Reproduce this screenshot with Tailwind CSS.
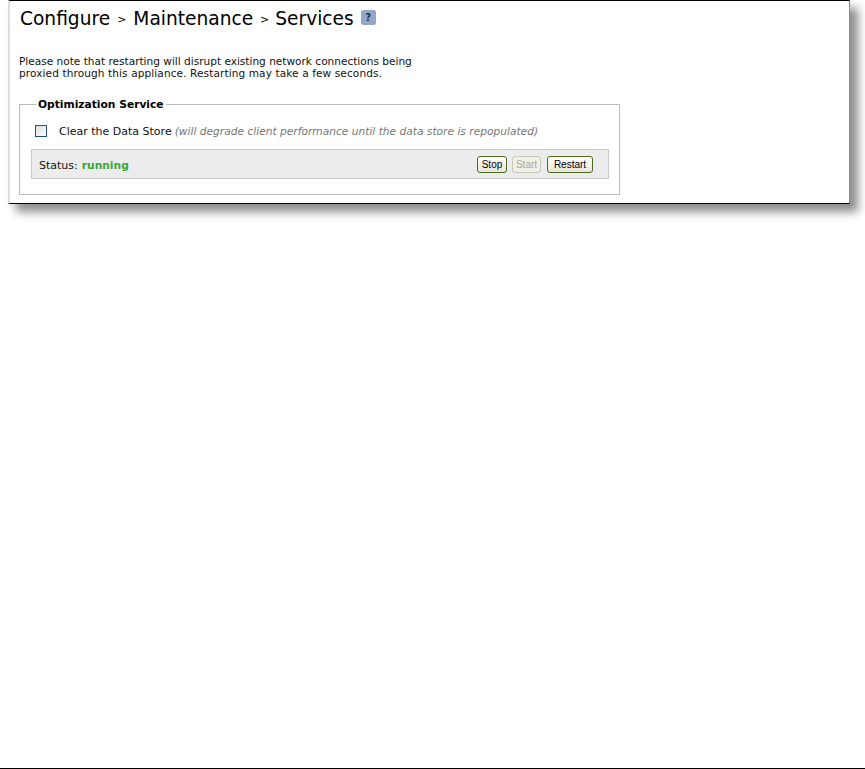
<!DOCTYPE html>
<html lang="en">
<head>
<meta charset="utf-8">
<title>Configure > Maintenance > Services</title>
<script src="https://cdn.jsdelivr.net/npm/@tailwindcss/browser@4"></script>
</head>
<body class="bg-white">
<div class="h-[769px] flex flex-col font-['DejaVu_Sans',sans-serif] text-[#111]">
  <div class="ml-[8px] w-[842px] h-[204px] bg-white border-t border-b border-black border-l-2 border-l-[#ddd] border-r border-r-[#888] shadow-[8px_8px_9px_rgba(0,0,0,0.45)] pl-[9px] pt-[8px]">
    <h1 class="flex items-center h-[20px] text-[18.6px] font-normal text-black leading-none">
      <span class="ml-[1px]">Configure</span>
      <span class="mx-[7px] text-[11px]">&gt;</span>
      <span>Maintenance</span>
      <span class="ml-[7px] mr-[6px] text-[11px]">&gt;</span>
      <span>Services</span>
      <span class="ml-[7px] -mt-[3px] w-[15px] h-[15px] rounded-[2px] bg-[#94a7c9] text-[#1f2f4f] text-[10px] font-bold flex items-center justify-center">?</span>
    </h1>
    <p class="mt-[26px] text-[10.55px] leading-[12px]">Please note that restarting will disrupt existing network connections being<br><span class="tracking-[0.1px]">proxied through this appliance. Restarting may take a few seconds.</span></p>
    <fieldset class="mt-[18px] w-[601px] h-[98px] border border-[#bbb] pl-[11px] pr-[10px] pb-[15px]">
      <legend class="ml-[5px] px-[2px] pt-[2px] text-[10.7px] font-bold leading-[12px] text-black">Optimization Service</legend>
      <div class="flex items-center h-[24px] mt-[9px] text-[11px]">
        <span class="ml-[4px] mb-[2px] w-[12px] h-[12px] border border-[#1c5180] bg-gradient-to-br from-[#dcdcd7] to-white"></span>
        <span class="ml-[12px]">Clear the Data Store</span>
        <em class="ml-[3px] text-[10.65px] text-[#777]">(will degrade client performance until the data store is repopulated)</em>
      </div>
      <div class="flex items-center mt-[5px] h-[30px] bg-[#ececec] border border-[#ccc] pl-[7px] pr-[15px] text-[11px]">
        <span class="mt-[4px]">Status:</span>
        <span class="ml-[4px] mt-[4px] text-[10.7px] font-bold text-[#3aa63a]">running</span>
        <div class="ml-auto mt-[1px] flex gap-[5px] font-['Liberation_Sans',sans-serif] text-[10px]">
          <button class="w-[30px] h-[17px] rounded-[3px] border border-[#4d6b1f] bg-gradient-to-b from-white to-[#e8e6d8] text-black leading-none">Stop</button>
          <button class="w-[29px] h-[17px] rounded-[3px] border border-[#c9c7ba] bg-[#f0efe8] text-[#a9a89e] leading-none">Start</button>
          <button class="ml-[1px] w-[46px] h-[17px] rounded-[3px] border border-[#4d6b1f] bg-gradient-to-b from-white to-[#e8e6d8] text-black leading-none">Restart</button>
        </div>
      </div>
    </fieldset>
  </div>
  <div class="mt-auto h-px bg-black"></div>
</div>
</body>
</html>
